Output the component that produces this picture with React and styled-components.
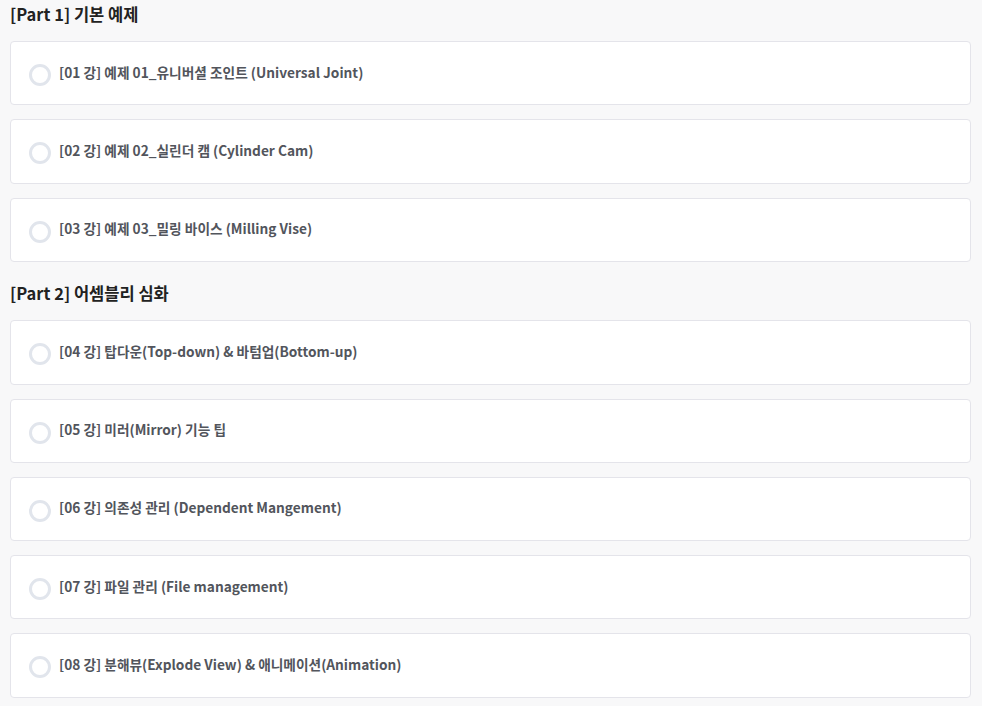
import React from 'react'
import styled, { createGlobalStyle } from 'styled-components'

const GlobalStyle = createGlobalStyle`
  html, body {
    margin: 0;
    padding: 0;
    background: #f8f8f9;
    font-family: 'Noto Sans CJK KR', 'Noto Sans', sans-serif;
  }
`

const parts = [
  {
    title: '[Part 1] 기본 예제',
    lessons: [
      '[01 강] 예제 01_유니버셜 조인트 (Universal Joint)',
      '[02 강] 예제 02_실린더 캠 (Cylinder Cam)',
      '[03 강] 예제 03_밀링 바이스 (Milling Vise)',
    ],
  },
  {
    title: '[Part 2] 어셈블리 심화',
    lessons: [
      '[04 강] 탑다운(Top-down) & 바텀업(Bottom-up)',
      '[05 강] 미러(Mirror) 기능 팁',
      '[06 강] 의존성 관리 (Dependent Mangement)',
      '[07 강] 파일 관리 (File management)',
      '[08 강] 분해뷰(Explode View) & 애니메이션(Animation)',
    ],
  },
]

const App = () => {
  return (
    <>
      <GlobalStyle />
      <Page>
        {parts.map((part) => (
          <Section key={part.title}>
            <PartTitle>{part.title}</PartTitle>
            <LessonList>
              {part.lessons.map((lesson) => (
                <LessonCard key={lesson}>
                  <Check />
                  <LessonTitle>{lesson}</LessonTitle>
                </LessonCard>
              ))}
            </LessonList>
          </Section>
        ))}
      </Page>
    </>
  )
}

const Page = styled.div`
  padding: 2px 11px 0 10px;
  display: flex;
  flex-direction: column;
  gap: 19.5px;
`
const Section = styled.section`
  display: flex;
  flex-direction: column;
`
const PartTitle = styled.h2`
  margin: 0 0 15px;
  font-size: 16.5px;
  line-height: 24px;
  font-weight: 700;
  color: #222;
`
const LessonList = styled.div`
  display: flex;
  flex-direction: column;
  gap: 14px;
`
const LessonCard = styled.div`
  height: 64.25px;
  box-sizing: border-box;
  display: flex;
  align-items: center;
  padding: 0 18px;
  background: #fff;
  border: 1px solid #e4e4ea;
  border-radius: 4px;
`
const Check = styled.span`
  width: 22px;
  height: 22px;
  box-sizing: border-box;
  border: 3px solid #e1e5ec;
  border-radius: 50%;
  margin-top: 4px;
  margin-right: 8px;
  flex-shrink: 0;
`
const LessonTitle = styled.span`
  font-size: 13.7px;
  font-weight: 700;
  color: #52555c;
  padding-bottom: 3px;
`

export default App
